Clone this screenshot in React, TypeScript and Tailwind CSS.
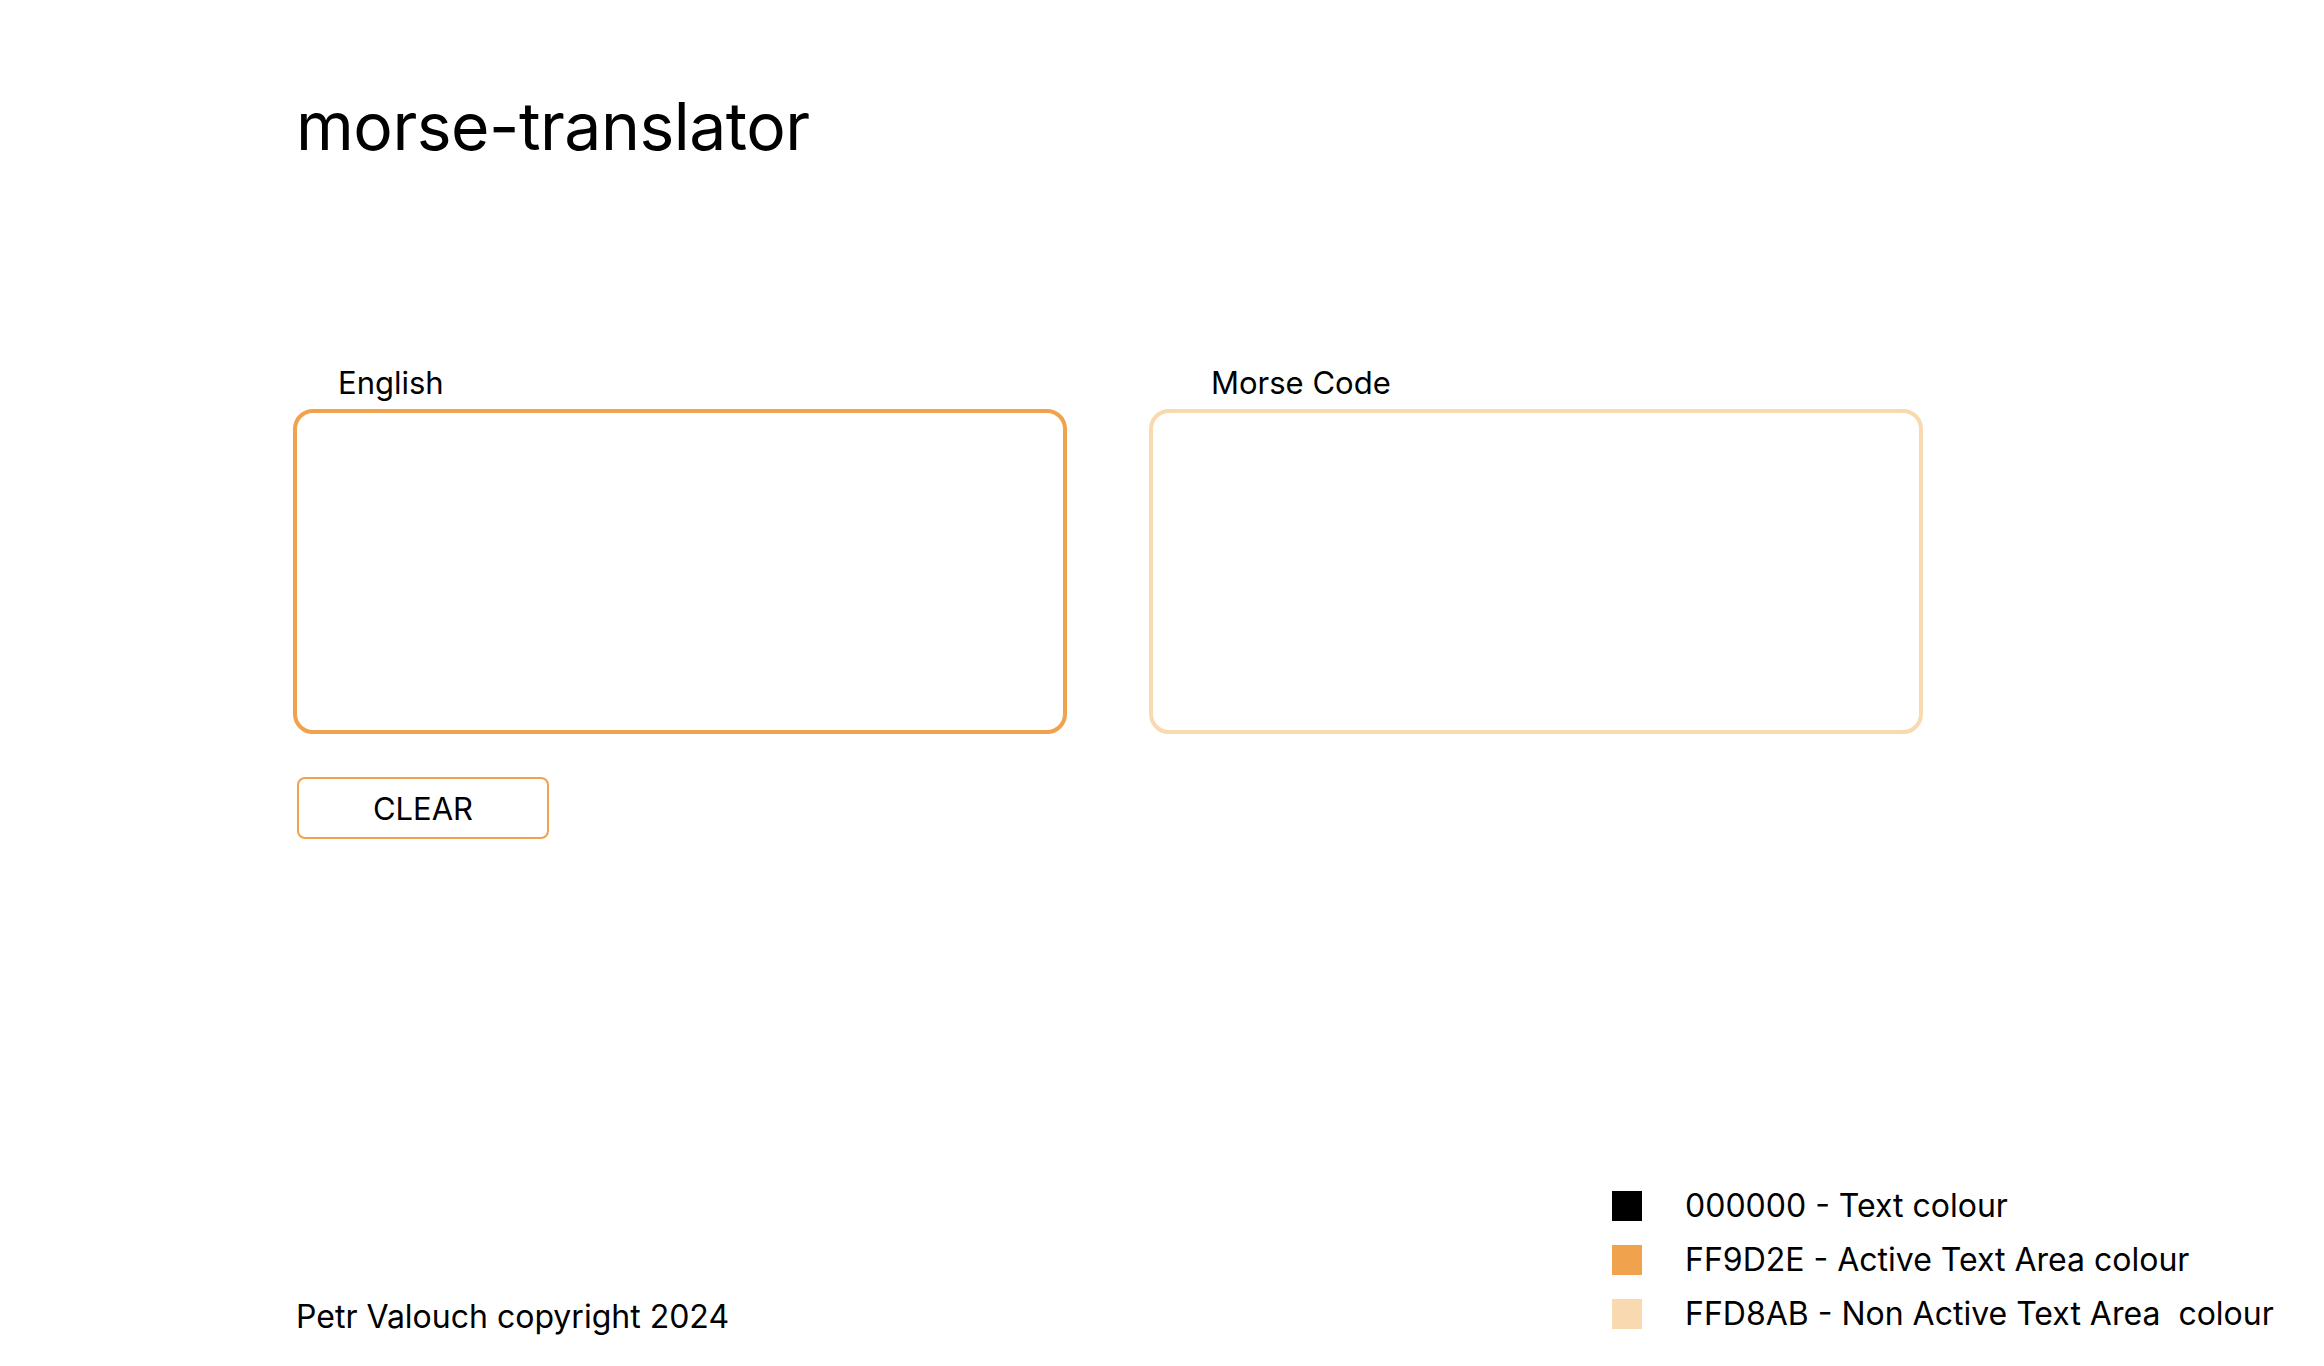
import React, { useState } from "react";

export default function App() {
  const [text, setText] = useState("");
  return (
    <div className="relative h-[1366px] w-full overflow-hidden bg-white font-['Inter','Noto_Sans',sans-serif] text-black">
      <div className="pl-[296px] pt-[93px]">
        <h1 className="text-[66px] leading-none font-normal tracking-[-0.5px]">morse-translator</h1>
      </div>

      <div className="mt-[208px] flex pl-[293px]">
        <div className="flex flex-col">
          <label className="pl-[45px] text-[31px] leading-none">English</label>
          <textarea
            value={text}
            onChange={(e) => setText(e.target.value)}
            className="mt-[11px] h-[325px] w-[774px] resize-none rounded-[20px] border-4 border-[#F0A24C] bg-white outline-none"
          />
        </div>
        <div className="ml-[82px] flex flex-col">
          <label className="pl-[62px] text-[31px] leading-none">Morse Code</label>
          <textarea
            readOnly
            className="mt-[11px] h-[325px] w-[774px] resize-none rounded-[20px] border-4 border-[#F8D9B0] bg-white outline-none"
          />
        </div>
      </div>

      <div className="mt-[43px] pl-[297px]">
        <button
          onClick={() => setText("")}
          className="flex h-[62px] w-[252px] items-center justify-center rounded-[8px] border-2 border-[#F0A24C] bg-white text-[31px] leading-none"
        >
          CLEAR
        </button>
      </div>

      <div className="absolute bottom-0 left-0 right-0 flex items-end justify-between pb-[33px] pl-[296px] pr-[20px]">
        <div className="text-[32px] leading-none">Petr Valouch copyright 2024</div>
        <div className="mb-[3px] flex w-[692px] flex-col gap-[22px]">
          <div className="flex items-center">
            <span className="h-[30px] w-[30px] shrink-0 bg-black" />
            <span className="ml-[43px] text-[32px] leading-none">000000 - Text colour</span>
          </div>
          <div className="flex items-center">
            <span className="h-[30px] w-[30px] shrink-0 bg-[#F0A24C]" />
            <span className="ml-[43px] text-[32px] leading-none">FF9D2E - Active Text Area colour</span>
          </div>
          <div className="flex items-center">
            <span className="h-[30px] w-[30px] shrink-0 bg-[#F8D9B0]" />
            <span className="ml-[43px] whitespace-pre text-[32px] leading-none">FFD8AB - Non Active Text Area  colour</span>
          </div>
        </div>
      </div>
    </div>
  );
}
